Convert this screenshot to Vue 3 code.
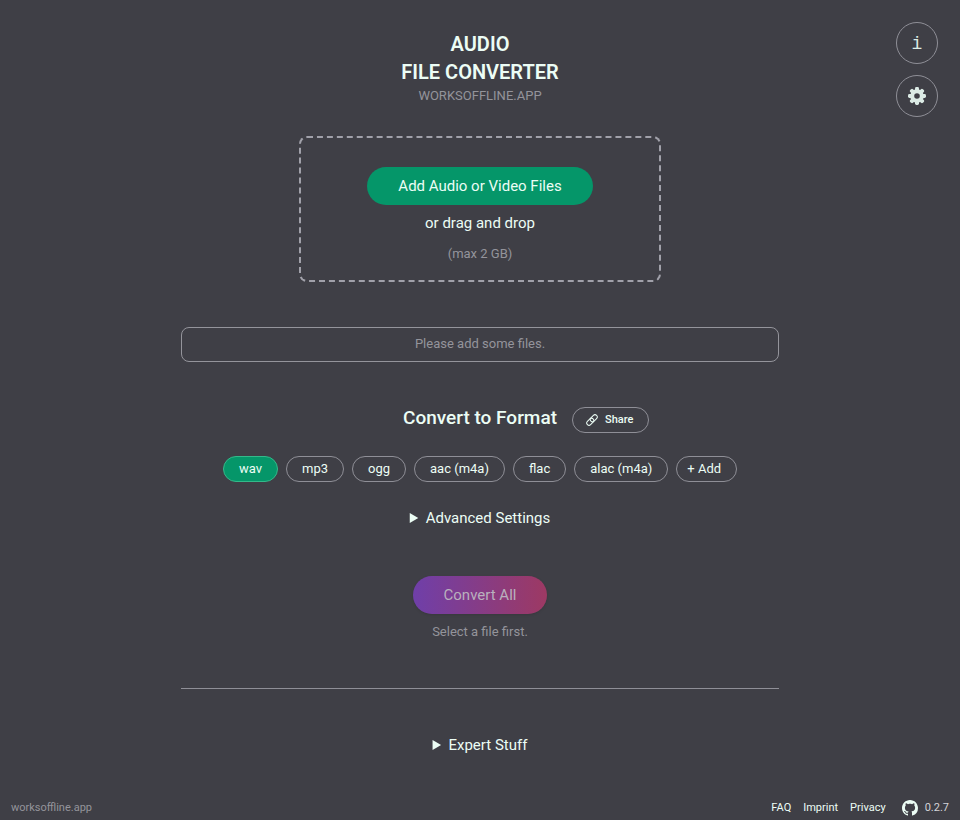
<script setup>
import { ref } from 'vue'

const formats = ['wav', 'mp3', 'ogg', 'aac (m4a)', 'flac', 'alac (m4a)']
const selected = ref('wav')
const fileInput = ref(null)
</script>

<template>
  <div class="page">
    <nav class="tools" aria-label="Tools">
      <button type="button" class="round info" aria-label="Info">i</button>
      <button type="button" class="round" aria-label="Settings">
        <svg width="18" height="18" viewBox="0 0 18 18" aria-hidden="true">
          <g fill="currentColor">
            <rect v-for="angle in [0, 45, 90, 135]" :key="angle" x="7" y="0" width="4" height="18" rx="1.4" :transform="`rotate(${angle} 9 9)`" />
          </g>
          <circle cx="9" cy="9" r="4.8" fill="#3f3f46" stroke="currentColor" stroke-width="4" />
        </svg>
      </button>
    </nav>

    <header class="head">
      <h1>AUDIO<br />FILE CONVERTER</h1>
      <p>WORKSOFFLINE.APP</p>
    </header>

    <main class="content">
      <section class="drop">
        <button type="button" class="pill add-files" @click="fileInput.click()">Add Audio or Video Files</button>
        <input ref="fileInput" type="file" multiple hidden aria-label="Audio or video files" />
        <p class="drag">or drag and drop</p>
        <p class="limit">(max 2 GB)</p>
      </section>

      <p class="empty">Please add some files.</p>

      <div class="format-head">
        <h2>Convert to Format</h2>
        <button type="button" class="share">
          <svg width="12" height="12" viewBox="0 0 24 24" fill="none" stroke="currentColor" stroke-width="2" stroke-linecap="round" aria-hidden="true">
            <rect x="7.5" y="4" width="16" height="9" rx="4.5" transform="rotate(-45 15.5 8.5)" />
            <rect x="0.5" y="11" width="16" height="9" rx="4.5" transform="rotate(-45 8.5 15.5)" />
          </svg>
          Share
        </button>
      </div>

      <div class="formats" role="radiogroup" aria-label="Output format">
        <label v-for="name in formats" :key="name" class="chip" :class="{ active: selected === name }">
          <input v-model="selected" type="radio" name="format" :value="name" />
          {{ name }}
        </label>
        <button type="button" class="chip more">+ Add</button>
      </div>

      <details class="advanced">
        <summary>Advanced Settings</summary>
      </details>

      <button type="button" class="pill convert" disabled>Convert All</button>
      <p class="hint">Select a file first.</p>

      <hr />

      <details class="expert">
        <summary>Expert Stuff</summary>
      </details>
    </main>

    <footer class="foot">
      <a class="muted" href="#">worksoffline.app</a>
      <nav class="links" aria-label="Footer">
        <a href="#">FAQ</a>
        <a href="#">Imprint</a>
        <a href="#">Privacy</a>
        <a class="version" href="#">
          <svg width="16" height="16" viewBox="0 0 16 16" fill="currentColor" aria-hidden="true">
            <path d="M8 0C3.58 0 0 3.58 0 8c0 3.54 2.29 6.53 5.47 7.59.4.07.55-.17.55-.38 0-.19-.01-.82-.01-1.49-2.01.37-2.53-.49-2.69-.94-.09-.23-.48-.94-.82-1.13-.28-.15-.68-.52-.01-.53.63-.01 1.08.58 1.23.82.72 1.21 1.87.87 2.33.66.07-.52.28-.87.51-1.07-1.78-.2-3.64-.89-3.64-3.95 0-.87.31-1.59.82-2.15-.08-.2-.36-1.02.08-2.12 0 0 .67-.21 2.2.82.64-.18 1.32-.27 2-.27s1.36.09 2 .27c1.53-1.04 2.2-.82 2.2-.82.44 1.1.16 1.92.08 2.12.51.56.82 1.27.82 2.15 0 3.07-1.87 3.75-3.65 3.95.29.25.54.73.54 1.48 0 1.07-.01 1.93-.01 2.2 0 .21.15.46.55.38A8.01 8.01 0 0 0 16 8c0-4.42-3.58-8-8-8z" />
          </svg>
          <span>0.2.7</span>
        </a>
      </nav>
    </footer>
  </div>
</template>

<style>
body {
  background: #3f3f46;
}
</style>

<style scoped>
.page {
  position: relative;
  display: flex;
  flex-direction: column;
  box-sizing: border-box;
  min-height: 100vh;
  padding-top: 30px;
  background: #3f3f46;
  color: #ecfdf5;
  font-family: Roboto, "Liberation Sans", sans-serif;
  font-size: 15px;
  line-height: 20px;
}

h1,
h2,
p {
  margin: 0;
  font-weight: 400;
}

button {
  font: inherit;
  color: inherit;
  cursor: pointer;
}

a {
  color: inherit;
  text-decoration: none;
}

.tools {
  position: absolute;
  top: 22px;
  right: 22px;
  display: flex;
  flex-direction: column;
  gap: 11px;
}

.round {
  display: flex;
  align-items: center;
  justify-content: center;
  box-sizing: border-box;
  width: 42px;
  height: 42px;
  padding: 0;
  border: 1px solid #8f8f97;
  border-radius: 50%;
  background: none;
  color: #dcebe5;
}

.info {
  padding-top: 2px;
  font-family: "Liberation Mono", monospace;
  font-size: 18px;
}

.head {
  text-align: center;
}

.head h1 {
  font-size: 20px;
  font-weight: 600;
  line-height: 28px;
}

.head p {
  color: #94949b;
  font-size: 13px;
}

.content {
  display: flex;
  flex: 1;
  flex-direction: column;
  align-items: center;
  box-sizing: border-box;
  width: 100%;
  max-width: 630px;
  margin: 0 auto;
  padding: 30px 16px 0;
  text-align: center;
}

.drop {
  display: flex;
  flex-direction: column;
  align-items: center;
  box-sizing: border-box;
  width: 100%;
  max-width: 362px;
  padding: 29px 16px 16px;
  border: 2px dashed #a1a1aa;
  border-radius: 8px;
}

.pill {
  height: 38px;
  padding: 0 31px;
  border: 0;
  border-radius: 19px;
}

.add-files {
  background: #059669;
}

.drag {
  margin-top: 8px;
}

.limit {
  margin-top: 11px;
}

.limit,
.empty,
.hint {
  color: #94949b;
  font-size: 13px;
}

.empty {
  box-sizing: border-box;
  width: 100%;
  margin-top: 45px;
  padding: 6px 16px 7px;
  border: 1px solid #94949b;
  border-radius: 8px;
}

.format-head {
  display: grid;
  grid-template-columns: 1fr auto 1fr;
  align-items: center;
  column-gap: 15px;
  width: 100%;
  margin-top: 41px;
}

.format-head h2 {
  grid-column: 2;
  font-size: 19px;
  font-weight: 500;
  line-height: 28px;
}

.share {
  display: flex;
  align-items: center;
  justify-self: start;
  gap: 7px;
  height: 26px;
  margin-top: 4px;
  padding: 0 15px 0 13px;
  border: 1px solid #8f8f97;
  border-radius: 13px;
  background: none;
  font-size: 11px;
  font-weight: 500;
}

.formats {
  display: flex;
  flex-wrap: wrap;
  justify-content: center;
  gap: 8px;
  margin-top: 23px;
}

.chip {
  position: relative;
  box-sizing: border-box;
  height: 26px;
  padding: 0 15px;
  border: 1px solid #8f8f97;
  border-radius: 13px;
  background: none;
  font-size: 13px;
  line-height: 24px;
  white-space: nowrap;
  cursor: pointer;
}

.chip input {
  position: absolute;
  inset: 0;
  margin: 0;
  opacity: 0;
}

.chip.active {
  border-color: #34b98a;
  background: #059669;
}

.chip.more {
  padding: 0 15px 0 10px;
}

summary {
  cursor: pointer;
}

.advanced {
  margin-top: 26px;
}

.convert {
  margin-top: 48px;
  background: linear-gradient(90deg, #6f3fa9, #9d3963);
  color: #b9b0bd;
  box-shadow: 0 1px 3px rgb(0 0 0 / 12%);
  cursor: default;
}

.hint {
  margin-top: 8px;
}

hr {
  width: 100%;
  height: 1px;
  margin: 46px 0;
  border: 0;
  background: #8f8f97;
}

.foot {
  display: flex;
  align-items: center;
  justify-content: space-between;
  padding: 0 11px 2px;
  font-size: 11px;
}

.muted {
  color: #94949b;
}

.links {
  display: flex;
  align-items: center;
  gap: 12px;
}

.version {
  display: flex;
  align-items: center;
  gap: 7px;
  margin-left: 4px;
}

.version span {
  color: #d4d4d8;
}
</style>
